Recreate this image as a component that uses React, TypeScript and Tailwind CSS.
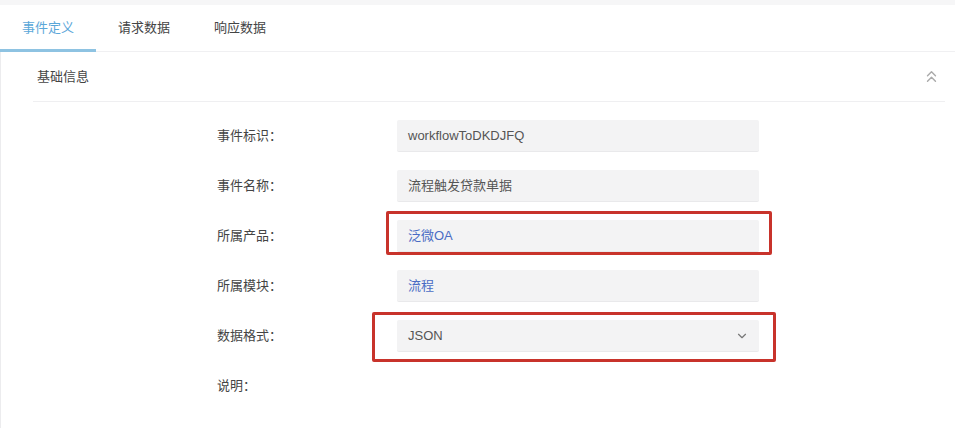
import { ChevronDown, ChevronsUp } from "lucide-react";

const rows = [
  { label: "事件标识：", value: "workflowToDKDJFQ", blue: false },
  { label: "事件名称：", value: "流程触发贷款单据", blue: false },
  { label: "所属产品：", value: "泛微OA", blue: true, mark: true },
  { label: "所属模块：", value: "流程", blue: true },
  { label: "数据格式：", value: "JSON", blue: false, select: true, mark: true, wide: true },
];

const tabs = ["事件定义", "请求数据", "响应数据"];

const App = () => {
  return (
    <div
      className="w-[955px] h-[428px] bg-white overflow-hidden text-[13px]"
      style={{ fontFamily: '"Liberation Sans", "Noto Sans CJK SC", sans-serif' }}
    >
      <div className="h-[5px] bg-[#f6f6f7]" />
      <div className="flex h-[47px] border-b border-[#f0f0f2]">
        {tabs.map((t, i) => (
          <div
            key={t}
            className={
              i === 0
                ? "relative px-[22px] flex items-center pb-[1px] text-[#5ba7d9]"
                : "relative px-[22px] flex items-center pb-[1px] text-[#444]"
            }
          >
            {t}
            {i === 0 && (
              <div className="absolute left-0 right-0 bottom-[-1px] h-[3px] bg-[#8ec3e2]" />
            )}
          </div>
        ))}
      </div>
      <div className="border-l border-[#ececee] h-full pl-[32px] pr-[10px]">
        <div className="flex items-center justify-between h-[50px] pl-[4px] pr-[4px] border-b border-[#efeff1]">
          <span className="text-[#444]">基础信息</span>
          <ChevronsUp size={19} strokeWidth={1.8} className="text-[#aaa]" />
        </div>
        <div className="flex flex-col gap-[18px] pt-[18px] pl-[184px]">
          {rows.map((r) => (
            <div key={r.label} className="flex items-center h-[32px]">
              <div className="w-[180px] text-[#444]">{r.label}</div>
              <div className="relative">
                <div
                  className={
                    "w-[362px] h-[32px] bg-[#f3f3f4] border-b border-[#e9e9eb] rounded-[2px] flex items-center justify-between pl-[11px] pr-[10px] " +
                    (r.blue ? "text-[#4a6cc4]" : "text-[#555]")
                  }
                >
                  <span>{r.value}</span>
                  {r.select && (
                    <ChevronDown size={14} strokeWidth={2} className="text-[#777]" />
                  )}
                </div>
                {r.mark && !r.wide && (
                  <div className="absolute left-[-11px] top-[-9px] w-[386px] h-[44px] border-[3px] border-[#c8332b] rounded-[2px]" />
                )}
                {r.mark && r.wide && (
                  <div className="absolute left-[-25px] top-[-8px] w-[404px] h-[50px] border-[3px] border-[#c8332b] rounded-[2px]" />
                )}
              </div>
            </div>
          ))}
          <div className="flex items-center h-[32px]">
            <div className="w-[180px] text-[#444]">说明：</div>
          </div>
        </div>
      </div>
    </div>
  );
};

export default App;
